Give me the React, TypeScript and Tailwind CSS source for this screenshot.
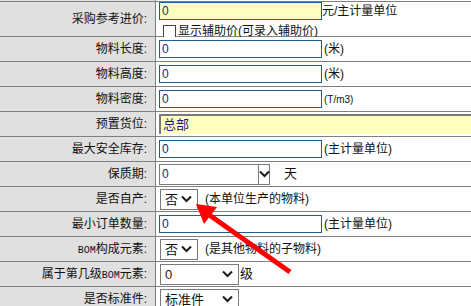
import React from "react";

const font = { fontFamily: '"Liberation Sans","Noto Sans CJK SC",sans-serif' };

function Chevron() {
  return (
    <svg width="11" height="8" viewBox="0 0 11 8" className="shrink-0">
      <polyline points="1,1.5 5.5,6 10,1.5" fill="none" stroke="#1a1a1a" strokeWidth="2" />
    </svg>
  );
}

function TextBox({ yellow = false, value = "0" }: { yellow?: boolean; value?: string }) {
  return (
    <div
      className={`w-[163px] h-[18px] border border-[#1d5e8e] pl-[2px] text-[12px] leading-[16px] text-[#1a1a8c] ${
        yellow ? "bg-[#ffffbf]" : "bg-white"
      }`}
    >
      {value}
    </div>
  );
}

function Select({ value, width, boxed = false }: { value: string; width: string; boxed?: boolean }) {
  return (
    <div className={`${width} h-[21px] border border-[#7a7a7a] bg-white flex items-center justify-between text-[13px]`}>
      <span className="pl-[4px] leading-none">{value}</span>
      {boxed ? (
        <div className="h-full w-[11px] border-l border-[#7a7a7a] flex items-center justify-center">
          <Chevron />
        </div>
      ) : (
        <div className="pr-[5px] flex items-center">
          <Chevron />
        </div>
      )}
    </div>
  );
}

function Row({ label, children, tall = false }: { label: React.ReactNode; children: React.ReactNode; tall?: boolean }) {
  return (
    <div className={`flex border-t border-[#808080] ${tall ? "h-[35px]" : "h-[25px]"}`}>
      <div className="w-[156px] shrink-0 bg-[#e0e0e0] border-r border-[#808080] flex items-center justify-end pr-[8px] text-[12px] text-[#111]">
        {label}
      </div>
      <div className="flex-1 bg-white pl-[3px] flex items-center text-[12px] text-[#111]">{children}</div>
    </div>
  );
}

const bom = <span className="text-[10px]" style={{ fontFamily: '"Liberation Mono",monospace' }}>BOM</span>;

export default function App() {
  return (
    <div className="relative w-[471px] h-[306px] overflow-hidden bg-white" style={font}>
      <div className="flex h-[1px]">
        <div className="w-[156px] bg-[#e0e0e0] border-r border-[#808080]" />
      </div>

      <Row label="采购参考进价:" tall>
        <div className="flex flex-col self-start">
          <div className="flex items-center">
            <TextBox yellow />
            <span>元/主计量单位</span>
          </div>
          <div className="flex items-center mt-[2px] pl-[4px]">
            <div className="w-[13px] h-[13px] border border-[#444] bg-white mr-[2px]" />
            <span>显示辅助价(可录入辅助价)</span>
          </div>
        </div>
      </Row>

      <Row label="物料长度:">
        <TextBox />
        <span className="ml-[2px]">(米)</span>
      </Row>

      <Row label="物料高度:">
        <TextBox />
        <span className="ml-[2px]">(米)</span>
      </Row>

      <Row label="物料密度:">
        <TextBox />
        <span className="ml-[2px] text-[10px]">(T/m3)</span>
      </Row>

      <Row label="预置货位:">
        <div className="w-[320px] shrink-0 h-[20px] bg-[#ffffbf] border-t-2 border-l-2 border-t-[#7a7a7a] border-l-[#7a7a7a] pl-[2px] text-[13px] leading-[18px] text-[#1a1a8c]">
          总部
        </div>
      </Row>

      <Row label="最大安全库存:">
        <TextBox />
        <span className="ml-[2px]">(主计量单位)</span>
      </Row>

      <Row label="保质期:">
        <div className="w-[111px] h-[21px] border border-[#7a7a7a] bg-white flex items-center justify-between">
          <span className="pl-[2px] text-[12px] text-[#1a1a8c]">0</span>
          <div className="h-full w-[11px] border-l border-[#7a7a7a] flex items-center justify-center">
            <Chevron />
          </div>
        </div>
        <span className="ml-[14px] text-[13px]">天</span>
      </Row>

      <Row label="是否自产:">
        <div className="ml-[1px]">
          <Select value="否" width="w-[38px]" />
        </div>
        <span className="ml-[7px]">(本单位生产的物料)</span>
      </Row>

      <Row label="最小订单数量:">
        <TextBox />
        <span className="ml-[2px]">(主计量单位)</span>
      </Row>

      <Row label={<span>{bom}构成元素:</span>}>
        <div className="ml-[1px]">
          <Select value="否" width="w-[38px]" />
        </div>
        <span className="ml-[7px]">(是其他物料的子物料)</span>
      </Row>

      <Row label={<span>属于第几级{bom}元素:</span>}>
        <div className="ml-[1px]">
          <Select value="0" width="w-[79px]" />
        </div>
        <span className="ml-[1px] text-[13px]">级</span>
      </Row>

      <Row label="是否标准件:">
        <div className="ml-[1px]">
          <Select value="标准件" width="w-[79px]" />
        </div>
      </Row>

      <svg className="absolute left-0 top-0 pointer-events-none" width="471" height="306" shapeRendering="crispEdges">
        <line x1="208" y1="214" x2="290" y2="272" stroke="#ff0000" strokeWidth="5" shapeRendering="auto" />
        <polygon points="196,204 217,207 204,224" fill="#ff0000" shapeRendering="auto" />
      </svg>
    </div>
  );
}
